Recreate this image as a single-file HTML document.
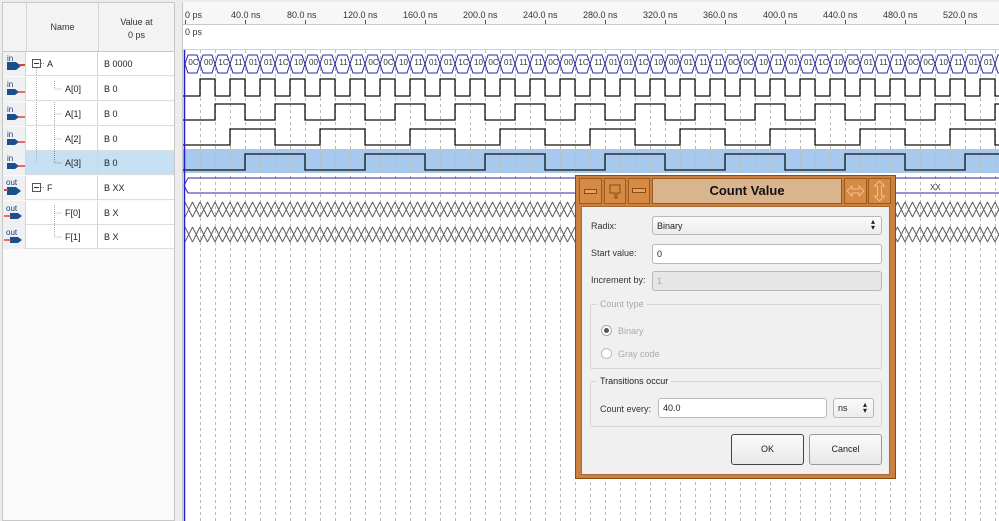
<!DOCTYPE html>
<html><head><meta charset="utf-8">
<style>
*{box-sizing:border-box;margin:0;padding:0}
body{width:999px;height:521px;overflow:hidden;background:#ececec;font-family:"Liberation Sans","DejaVu Sans",sans-serif;font-size:9px;color:#222;position:relative}
.abs{position:absolute}
#left{left:2px;top:2px;width:173px;height:519px;background:#fafafa;border:1px solid #c8c8c8}
.hd{position:absolute;top:0;height:49px;border-right:1px solid #d4d4d4;border-bottom:1px solid #c8c8c8;background:#f3f3f3;text-align:center;font-size:9px;color:#333}
.row{position:absolute;left:0;width:171px;height:24px;border-bottom:1px solid #ddd;background:#fff}
.row .ic{position:absolute;left:0;top:0;width:23px;height:24px;background:#eef0f2;border-right:1px solid #d4d4d4}
.row .nm{position:absolute;left:24px;width:71px;height:24px;border-right:1px solid #d4d4d4}
.row .v{position:absolute;left:101px;top:7px;font-size:9px}
.row .t{position:absolute;top:7px;font-size:9px}
#wave{left:182px;top:2px;width:817px;height:519px;background:#fff;border-left:1px solid #c8c8c8}
.bus span{display:inline-block;width:15px;text-align:center;font-size:8px;color:#333;overflow:hidden;line-height:18px;height:18px}
#dlg{left:575px;top:175px;width:321px;height:304px;background:#c98040;border:1px solid #8a4a10}
.tb{position:absolute;top:2px;height:26px;background:#d68a44;border:1px solid #9a5a20}
.lbl{position:absolute;font-size:9px;color:#333}
.inp{position:absolute;background:#fff;border:1px solid #b8b8b8;border-radius:3px;font-size:9px;padding:4px 0 0 4px}
.btn{position:absolute;background:linear-gradient(#fafafa,#e8e8e8);border:1px solid #999;border-radius:3px;text-align:center;font-size:9px;line-height:29px}
.grp{position:absolute;border:1px solid #d6d6d6;border-radius:2px}
.gl{position:absolute;top:-6px;left:6px;background:#f0f0f0;padding:0 3px;font-size:9px}
</style></head><body>

<div id="left" class="abs">
  <div class="hd" style="left:0;width:24px"></div>
  <div class="hd" style="left:24px;width:72px;line-height:49px">Name</div>
  <div class="hd" style="left:96px;width:75px;padding-top:13px;line-height:13px;border-right:none">Value at<br>0 ps</div>
  <div class="row" style="top:49px"><div class="ic"><svg width="23" height="24"><text x="4" y="9" font-size="8" fill="#1a3a80" font-family="Liberation Sans">in</text><path d="M4 10h9l5 4-5 4H4z" fill="#1a4f8f"/><path d="M16 13h6" stroke="#e04040" stroke-width="2"/></svg></div><div class="nm"><svg width="71" height="24"><rect x="5.5" y="7.5" width="8" height="8" fill="#fff" stroke="#555"/><path d="M7 11.5h5" stroke="#333"/><path d="M14 11.5h4" stroke="#888" stroke-dasharray="1 1"/><path d="M9.5 16v56" stroke="#aaa" stroke-dasharray="1 1"/></svg><span class="t" style="left:20px">A</span></div><div class="v">B 0000</div></div>
  <div class="row" style="top:74px"><div class="ic"><svg width="23" height="24"><text x="4" y="10" font-size="8" fill="#1a3a80" font-family="Liberation Sans">in</text><path d="M4 12h8l4 3-4 3H4z" fill="#1a4f8f"/><path d="M15 15h7" stroke="#e04040" stroke-width="1.5"/></svg></div><div class="nm"><svg width="71" height="24"><path d="M9.5 0v24" stroke="#aaa" stroke-dasharray="1 1"/><path d="M27.5 4v8h8" stroke="#aaa" stroke-dasharray="1 1" fill="none"/></svg><span class="t" style="left:38px">A[0]</span></div><div class="v">B 0</div></div>
  <div class="row" style="top:99px"><div class="ic"><svg width="23" height="24"><text x="4" y="10" font-size="8" fill="#1a3a80" font-family="Liberation Sans">in</text><path d="M4 12h8l4 3-4 3H4z" fill="#1a4f8f"/><path d="M15 15h7" stroke="#e04040" stroke-width="1.5"/></svg></div><div class="nm"><svg width="71" height="24"><path d="M9.5 0v24" stroke="#aaa" stroke-dasharray="1 1"/><path d="M27.5 0v24M27.5 12h8" stroke="#aaa" stroke-dasharray="1 1" fill="none"/></svg><span class="t" style="left:38px">A[1]</span></div><div class="v">B 0</div></div>
  <div class="row" style="top:124px"><div class="ic"><svg width="23" height="24"><text x="4" y="10" font-size="8" fill="#1a3a80" font-family="Liberation Sans">in</text><path d="M4 12h8l4 3-4 3H4z" fill="#1a4f8f"/><path d="M15 15h7" stroke="#e04040" stroke-width="1.5"/></svg></div><div class="nm"><svg width="71" height="24"><path d="M9.5 0v24" stroke="#aaa" stroke-dasharray="1 1"/><path d="M27.5 0v24M27.5 12h8" stroke="#aaa" stroke-dasharray="1 1" fill="none"/></svg><span class="t" style="left:38px">A[2]</span></div><div class="v">B 0</div></div>
  <div class="row" style="top:148px;background:#c5dff3"><div class="ic"><svg width="23" height="24"><text x="4" y="10" font-size="8" fill="#1a3a80" font-family="Liberation Sans">in</text><path d="M4 12h8l4 3-4 3H4z" fill="#1a4f8f"/><path d="M15 15h7" stroke="#e04040" stroke-width="1.5"/></svg></div><div class="nm"><svg width="71" height="24"><path d="M9.5 0v12" stroke="#aaa" stroke-dasharray="1 1"/><path d="M27.5 0v12h8" stroke="#888" stroke-dasharray="1 1" fill="none"/></svg><span class="t" style="left:38px">A[3]</span></div><div class="v">B 0</div></div>
  <div class="row" style="top:173px"><div class="ic"><svg width="23" height="24"><text x="3" y="9" font-size="8" fill="#1a3a80" font-family="Liberation Sans">out</text><path d="M4 11h9l5 4-5 4H4z" fill="#1a4f8f"/><path d="M1 14h4" stroke="#e04040" stroke-width="2"/></svg></div><div class="nm"><svg width="71" height="24"><rect x="5.5" y="7.5" width="8" height="8" fill="#fff" stroke="#555"/><path d="M7 11.5h5" stroke="#333"/><path d="M14 11.5h4" stroke="#888" stroke-dasharray="1 1"/></svg><span class="t" style="left:20px">F</span></div><div class="v">B XX</div></div>
  <div class="row" style="top:198px"><div class="ic"><svg width="23" height="24"><text x="3" y="10" font-size="8" fill="#1a3a80" font-family="Liberation Sans">out</text><path d="M7 12h8l4 3-4 3H7z" fill="#1a4f8f"/><path d="M1 15h7" stroke="#e04040" stroke-width="1.5"/></svg></div><div class="nm"><svg width="71" height="24"><path d="M27.5 4v20M27.5 12h8" stroke="#aaa" stroke-dasharray="1 1" fill="none"/></svg><span class="t" style="left:38px">F[0]</span></div><div class="v">B X</div></div>
  <div class="row" style="top:222px"><div class="ic"><svg width="23" height="24"><text x="3" y="10" font-size="8" fill="#1a3a80" font-family="Liberation Sans">out</text><path d="M7 12h8l4 3-4 3H7z" fill="#1a4f8f"/><path d="M1 15h7" stroke="#e04040" stroke-width="1.5"/></svg></div><div class="nm"><svg width="71" height="24"><path d="M27.5 0v12h8" stroke="#aaa" stroke-dasharray="1 1" fill="none"/></svg><span class="t" style="left:38px">F[1]</span></div><div class="v">B X</div></div>
</div>

<div id="wave" class="abs">
  <svg id="ws" width="817" height="519" style="position:absolute;left:0;top:0">
    <rect x="0" y="0" width="817" height="22" fill="#f7f7f7"/>
    <path d="M0 22.5h817" stroke="#c8c8c8"/>
    <path d="M0 47.5h817" stroke="#d0d0d0"/>
    <rect x="0" y="147" width="817" height="24" fill="#a8c9ee"/>
    <g id="grid" stroke="#bbb" stroke-dasharray="3 3"></g>
    <g id="ticks" stroke="#555"></g>
    <g font-size="9" fill="#333" font-family="Liberation Sans">
      <text x="2" y="16">0 ps</text><text x="48" y="16">40.0 ns</text><text x="104" y="16">80.0 ns</text><text x="160" y="16">120.0 ns</text><text x="220" y="16">160.0 ns</text><text x="280" y="16">200.0 ns</text><text x="340" y="16">240.0 ns</text><text x="400" y="16">280.0 ns</text><text x="460" y="16">320.0 ns</text><text x="520" y="16">360.0 ns</text><text x="580" y="16">400.0 ns</text><text x="640" y="16">440.0 ns</text><text x="700" y="16">480.0 ns</text><text x="760" y="16">520.0 ns</text>
      <text x="2" y="33">0 ps</text>
      <text x="747" y="188" font-size="8">XX</text>
    </g>
    <g id="sig" fill="none" stroke="#111" stroke-width="1.3"></g>
    <g id="busg" fill="none" stroke="#2a2aa8" stroke-width="1"></g>
    <path d="M1.5 48v471" stroke="#2020d0" stroke-width="1.5"/>
  </svg>
  <div class="bus abs" style="left:3px;top:52px;width:814px;white-space:nowrap;overflow:hidden"><span>0C</span><span>00</span><span>1C</span><span>11</span><span>01</span><span>01</span><span>1C</span><span>10</span><span>00</span><span>01</span><span>11</span><span>11</span><span>0C</span><span>0C</span><span>10</span><span>11</span><span>01</span><span>01</span><span>1C</span><span>10</span><span>0C</span><span>01</span><span>11</span><span>11</span><span>0C</span><span>00</span><span>1C</span><span>11</span><span>01</span><span>01</span><span>1C</span><span>10</span><span>00</span><span>01</span><span>11</span><span>11</span><span>0C</span><span>0C</span><span>10</span><span>11</span><span>01</span><span>01</span><span>1C</span><span>10</span><span>0C</span><span>01</span><span>11</span><span>11</span><span>0C</span><span>0C</span><span>10</span><span>11</span><span>01</span><span>01</span><span>1C</span></div>
</div>

<div id="dlg" class="abs">
  <div class="tb" style="left:3px;width:23px"><div style="position:absolute;left:4px;top:10px;width:13px;height:5px;border:1px solid #8a4a10;background:#e8a060"></div></div>
  <div class="tb" style="left:28px;width:22px"><svg width="20" height="24"><path d="M5 6h10v8h-3v5h-2v-5H5z" fill="none" stroke="#8a4a10"/></svg></div>
  <div class="tb" style="left:52px;width:22px"><div style="position:absolute;left:3px;top:9px;width:14px;height:5px;border:1px solid #8a4a10;background:#e8a060"></div></div>
  <div class="tb" style="left:76px;width:190px;background:#d9b48c;text-align:center;font-size:13px;font-weight:bold;line-height:24px;color:#111">Count Value</div>
  <div class="tb" style="left:268px;width:23px"><svg width="21" height="24"><path d="M2 12l5-5v3h7V7l5 5-5 5v-3H7v3z" fill="none" stroke="#f0c090"/></svg></div>
  <div class="tb" style="left:292px;width:23px"><svg width="21" height="24"><path d="M10.5 2l5 5h-3v10h3l-5 5-5-5h3V7h-3z" fill="none" stroke="#f0c090"/></svg></div>
  <div style="position:absolute;left:5px;top:30px;width:309px;height:269px;background:#f0f0f0;border:1px solid #a86a30">
    <div class="lbl" style="left:9px;top:14px">Radix:</div>
    <div class="inp" style="left:70px;top:9px;width:230px;height:19px;background:linear-gradient(#fbfbfb,#ececec)">Binary<span style="position:absolute;right:6px;top:2px;font-size:8px;line-height:6px">▴<br>▾</span></div>
    <div class="lbl" style="left:9px;top:41px">Start value:</div>
    <div class="inp" style="left:70px;top:37px;width:230px;height:20px">0</div>
    <div class="lbl" style="left:9px;top:68px">Increment by:</div>
    <div class="inp" style="left:70px;top:64px;width:230px;height:20px;background:#e6e6e6;color:#aaa">1</div>
    <div class="grp" style="left:8px;top:97px;width:292px;height:65px"><span class="gl" style="color:#aaa">Count type</span>
      <div style="position:absolute;left:10px;top:20px;width:11px;height:11px;border:1px solid #aaa;border-radius:50%;background:#fff"><div style="margin:2px;width:5px;height:5px;border-radius:50%;background:#555"></div></div>
      <div class="lbl" style="left:27px;top:21px;color:#aaa">Binary</div>
      <div style="position:absolute;left:10px;top:43px;width:11px;height:11px;border:1px solid #bbb;border-radius:50%;background:#fff"></div>
      <div class="lbl" style="left:27px;top:44px;color:#aaa">Gray code</div>
    </div>
    <div class="grp" style="left:8px;top:174px;width:292px;height:46px"><span class="gl" style="color:#222">Transitions occur</span>
      <div class="lbl" style="left:9px;top:22px">Count every:</div>
      <div class="inp" style="left:67px;top:16px;width:169px;height:20px">40.0</div>
      <div class="inp" style="left:242px;top:16px;width:41px;height:20px;background:linear-gradient(#fbfbfb,#ececec)">ns<span style="position:absolute;right:6px;top:3px;font-size:8px;line-height:6px">▴<br>▾</span></div>
    </div>
    <div class="btn" style="left:149px;top:227px;width:73px;height:31px;border-color:#444">OK</div>
    <div class="btn" style="left:227px;top:227px;width:73px;height:31px">Cancel</div>
  </div>
</div>

<script>
var ns="http://www.w3.org/2000/svg";
function el(p,t,a){var e=document.createElementNS(ns,t);for(var k in a)e.setAttribute(k,a[k]);p.appendChild(e);return e;}
var g=document.getElementById('grid'),tk=document.getElementById('ticks'),sg=document.getElementById('sig'),bg=document.getElementById('busg');
var O=2;
for(var x=O+15;x<817;x+=15)el(g,'path',{d:'M'+(x+.5)+' 48V519'});
for(var x=O;x<817;x+=60)el(tk,'path',{d:'M'+(x+.5)+' 18V22'});
function sq(y1,y0,first,hi,per){var d='M0 '+y0;var x=first;var lvl=0;d+='H'+x;while(x<817){lvl=1-lvl;d+='V'+(lvl?y1:y0);var n=x+(lvl?hi:per-hi);d+='H'+Math.min(n,817);x=n;}el(sg,'path',{d:d});}
sq(77,94,O+15,15,30);
sq(102,118,O+30,30,60);
sq(127,143,O+45,45,90);
sq(152,168,O+60,60,120);
var d='';for(var x=O;x<817;x+=15){d+='M'+x+' 62L'+(x+3)+' 53H'+(x+12)+'L'+(x+15)+' 62L'+(x+12)+' 71H'+(x+3)+'Z';}
el(bg,'path',{d:d});
el(bg,'path',{d:'M817 176H5L1 183.5L5 191H817'});
var dx='';for(var x=O;x<817;x+=7.5){dx+='M'+x+' 200L'+(x+7.5)+' 215M'+(x+7.5)+' 200L'+x+' 215M'+x+' 225L'+(x+7.5)+' 240M'+(x+7.5)+' 225L'+x+' 240';}
el(sg,'path',{d:dx,stroke:'#555','stroke-width':'0.9'});
</script>
</body></html>
